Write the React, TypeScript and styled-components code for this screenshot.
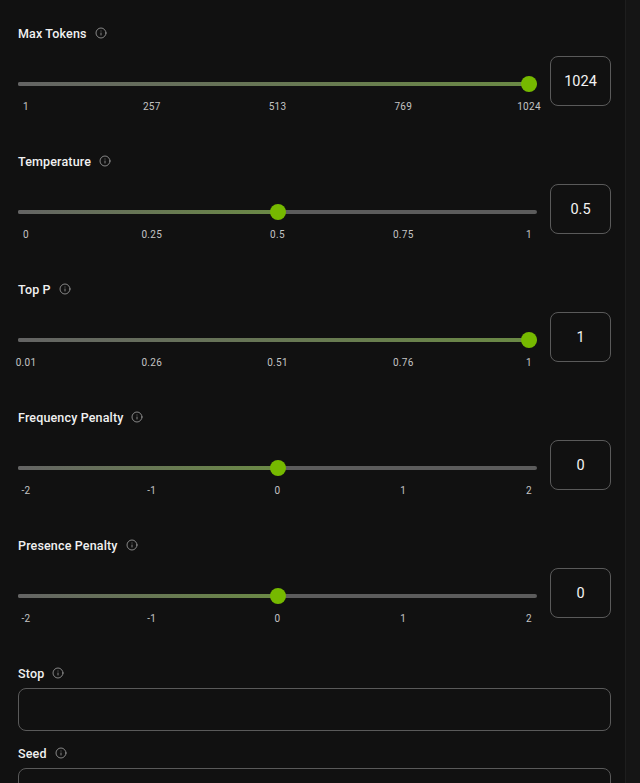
import React from 'react';
import styled, { createGlobalStyle } from 'styled-components';
import { Info } from 'lucide-react';

const GlobalStyle = createGlobalStyle`
  html, body { margin: 0; padding: 0; background: #151515; }
  body { font-family: Roboto, "Liberation Sans", sans-serif; }
`;

type SliderDef = {
  label: string;
  min: number;
  max: number;
  value: number;
  display: string;
  ticks: string[];
};

const SLIDERS: SliderDef[] = [
  { label: 'Max Tokens', min: 1, max: 1024, value: 1024, display: '1024', ticks: ['1', '257', '513', '769', '1024'] },
  { label: 'Temperature', min: 0, max: 1, value: 0.5, display: '0.5', ticks: ['0', '0.25', '0.5', '0.75', '1'] },
  { label: 'Top P', min: 0.01, max: 1, value: 1, display: '1', ticks: ['0.01', '0.26', '0.51', '0.76', '1'] },
  { label: 'Frequency Penalty', min: -2, max: 2, value: 0, display: '0', ticks: ['-2', '-1', '0', '1', '2'] },
  { label: 'Presence Penalty', min: -2, max: 2, value: 0, display: '0', ticks: ['-2', '-1', '0', '1', '2'] },
];

const ParamSlider: React.FC<SliderDef> = ({ label, min, max, value, display, ticks }) => {
  const pct = ((value - min) / (max - min)) * 100;
  return (
    <SliderSection>
      <Label>
        {label}
        <Info size={12} strokeWidth={1.6} color="#a3a3a3" />
      </Label>
      <Row>
        <SliderCol>
          <TrackWrap>
            <Track />
            <ThumbLane>
              <Fill style={{ width: `calc(${pct}% + 8px)` }} />
              <Thumb style={{ left: `${pct}%` }} />
            </ThumbLane>
          </TrackWrap>
          <Ticks>
            {ticks.map((t, i) => (
              <Tick key={i}>{t}</Tick>
            ))}
          </Ticks>
        </SliderCol>
        <ValueBox>{display}</ValueBox>
      </Row>
    </SliderSection>
  );
};

export default function App() {
  return (
    <>
      <GlobalStyle />
      <Panel>
        {SLIDERS.map((s) => (
          <ParamSlider key={s.label} {...s} />
        ))}
        <FieldSection>
          <Label>
            Stop
            <Info size={12} strokeWidth={1.6} color="#a3a3a3" />
          </Label>
          <TextInput />
        </FieldSection>
        <FieldSection $tight>
          <Label>
            Seed
            <Info size={12} strokeWidth={1.6} color="#a3a3a3" />
          </Label>
          <TextInput />
        </FieldSection>
      </Panel>
    </>
  );
}

const Panel = styled.div`
  width: 626px;
  height: 783px;
  padding: 0 14px 0 18px;
  box-sizing: border-box;
  background: #111111;
  border-right: 1px solid #1e1e1e;
  overflow: hidden;
`;

const SliderSection = styled.section`
  height: 128px;
  padding-top: 24px;
  box-sizing: border-box;
`;

const Label = styled.div`
  display: flex;
  align-items: center;
  gap: 8px;
  height: 18px;
  font-size: 12.5px;
  font-weight: 500;
  color: #f0f0f0;
  letter-spacing: 0.15px;
`;

const Row = styled.div`
  display: flex;
  align-items: flex-start;
  gap: 13px;
  margin-top: 14px;
`;

const SliderCol = styled.div`
  width: 519px;
`;

const TrackWrap = styled.div`
  position: relative;
  height: 16px;
  margin-top: 20px;
`;

const Track = styled.div`
  position: absolute;
  left: 0;
  right: 0;
  top: 6px;
  height: 4px;
  border-radius: 2px;
  background: #5c5c5c;
`;

const ThumbLane = styled.div`
  position: absolute;
  left: 8px;
  right: 8px;
  top: 0;
  bottom: 0;
`;

const Fill = styled.div`
  position: absolute;
  left: -8px;
  top: 6px;
  height: 4px;
  border-radius: 2px;
  background: linear-gradient(90deg, #646464 0%, #6b8a45 100%);
`;

const Thumb = styled.div`
  position: absolute;
  top: 0;
  width: 16px;
  height: 16px;
  margin-left: -8px;
  border-radius: 50%;
  background: #76b900;
`;

const Ticks = styled.div`
  display: flex;
  justify-content: space-between;
  margin: 9px 8px 0;
  height: 12px;
`;

const Tick = styled.span`
  display: flex;
  justify-content: center;
  width: 0;
  white-space: nowrap;
  font-size: 10px;
  line-height: 12px;
  letter-spacing: 0.3px;
  color: #c4c4c4;
`;

const ValueBox = styled.div`
  width: 61px;
  height: 50px;
  box-sizing: border-box;
  border: 1px solid #5a5a5a;
  border-radius: 8px;
  display: flex;
  align-items: center;
  justify-content: center;
  font-size: 14.5px;
  color: #f4f4f4;
`;

const FieldSection = styled.section<{ $tight?: boolean }>`
  padding-top: ${(p) => (p.$tight ? '13px' : '24px')};
`;

const TextInput = styled.div`
  margin-top: 6px;
  height: 43px;
  box-sizing: border-box;
  border: 1px solid #5a5a5a;
  border-radius: 8px;
  background: #111111;
`;
